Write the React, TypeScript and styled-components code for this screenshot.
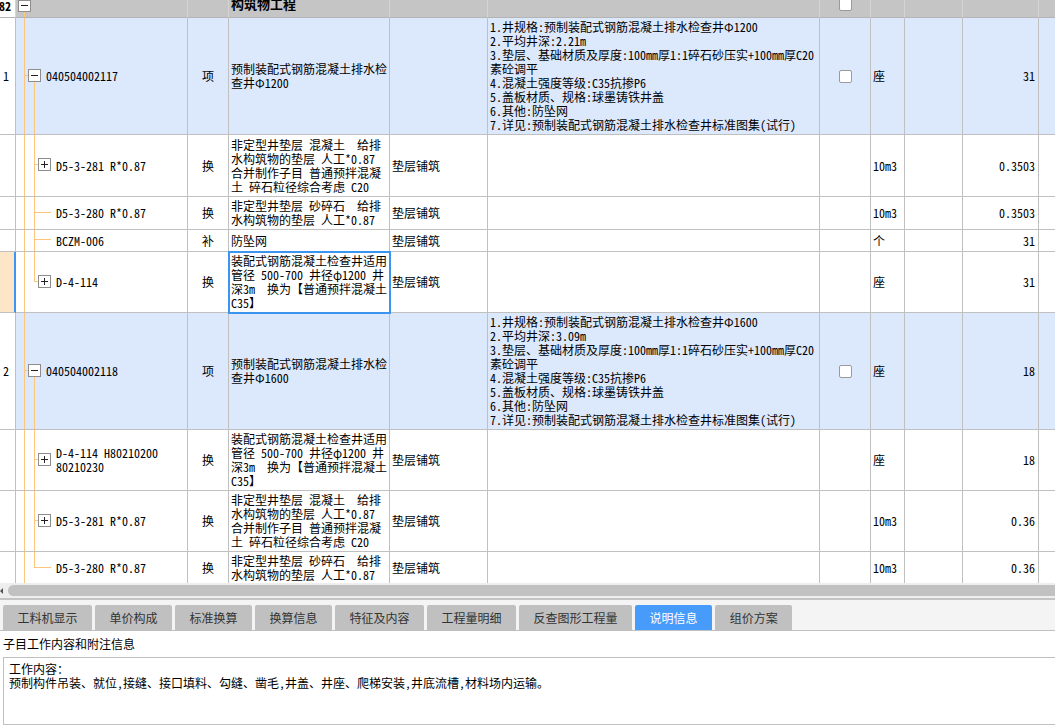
import React from 'react';
import styled, { createGlobalStyle, css } from 'styled-components';

const GRID_FONT = `"Noto Sans Mono CJK SC", "Noto Sans CJK SC", monospace`;
const UI_FONT = `"Noto Sans CJK SC", sans-serif`;
const GRID_LINE = '#c0c0c0';
const TREE_LINE = '#fcc67c';
const BOX_LINE = '#8d8d8d';
const COLS = '16px 172px 41px 161px 98px 332px 51px 34px 58px 76px 60px';

const GlobalStyle = createGlobalStyle`
  html, body {
    margin: 0;
    padding: 0;
    background: #ffffff;
  }
  body {
    font-family: ${GRID_FONT};
    font-size: 12px;
    color: #000;
    overflow: hidden;
  }
`;

const Page = styled.div`
  width: 1055px;
  height: 725px;
  overflow: hidden;
  display: flex;
  flex-direction: column;
  background: #fff;
`;

const Grid = styled.div`
  height: 583px;
  flex-shrink: 0;
  overflow: hidden;
`;

const Row = styled.div<{ $h: number; $tone: 'item' | 'sub' }>`
  display: grid;
  grid-template-columns: ${COLS};
  height: ${(p) => p.$h}px;
  background: ${(p) => (p.$tone === 'item' ? '#dce8fc' : '#ffffff')};
`;

const Cell = styled.div`
  box-sizing: border-box;
  min-width: 0;
  display: flex;
  align-items: center;
  border-right: 1px solid ${GRID_LINE};
  border-bottom: 1px solid ${GRID_LINE};
  line-height: 14px;
  white-space: pre;
  overflow: hidden;
`;

const HeadRow = styled.div`
  display: grid;
  grid-template-columns: ${COLS};
  height: 18px;
  background: #c5c5c5;

  & > ${Cell} {
    align-items: flex-start;
    line-height: 12px;
    border-right-color: #d4d4d4;
    border-bottom-color: #b4b4b4;
  }
`;

const NumCell = styled(Cell)<{ $selected?: boolean }>`
  padding-left: 3px;
  background: #fff;
  ${(p) =>
    p.$selected &&
    css`
      background: #fde6c8;
      border-right: 2px solid #3b95f2;
    `}
`;

const HeadNum = styled.span`
  font-weight: bold;
  margin-left: -4px;
`;

const CodeCell = styled(Cell)`
  padding: 0;
`;

const TreeSvg = styled.svg`
  display: block;
  flex-shrink: 0;
`;

const TypeCell = styled(Cell)`
  justify-content: center;
`;

const TextCell = styled(Cell)<{ $focus?: boolean }>`
  padding: 0 2px;
  ${(p) =>
    p.$focus &&
    css`
      position: relative;
      z-index: 1;
      outline: 2px solid #3a94f0;
      outline-offset: -1px;
    `}
`;

const HeadTitle = styled.span`
  font-weight: bold;
  font-size: 13px;
  margin-top: -2px;
`;

const CheckCell = styled(Cell)`
  justify-content: center;
`;

const Checkbox = styled.span<{ $raised?: boolean }>`
  display: block;
  width: 11px;
  height: 11px;
  border: 1px solid #9a9a9a;
  border-radius: 2px;
  background: #fff;
  ${(p) => p.$raised && 'margin-top: -2px;'}
`;

const QtyCell = styled(Cell)`
  justify-content: flex-end;
  padding-right: 3px;
`;

const HScroll = styled.div`
  height: 15px;
  flex-shrink: 0;
  display: flex;
  align-items: center;
  background: #eeeeee;
`;

const ScrollArrow = styled.span`
  width: 0;
  height: 0;
  border-top: 3px solid transparent;
  border-bottom: 3px solid transparent;
  border-right: 3px solid #555;
`;

const ScrollThumb = styled.div`
  flex: 1;
  height: 11px;
  margin: 0 -12px 0 5px;
  border-radius: 6px;
  background: #c1c1c1;
`;

const Divider = styled.div`
  height: 2px;
  flex-shrink: 0;
  background: #c4c4c4;
`;

const TabStrip = styled.div`
  height: 31px;
  box-sizing: border-box;
  flex-shrink: 0;
  display: flex;
  gap: 3px;
  padding: 5px 0 0 3px;
  background: #f4f4f4;
  border-bottom: 1px solid ${GRID_LINE};
`;

const Tab = styled.div<{ $active?: boolean }>`
  height: 25px;
  padding: 0 14.5px;
  border-radius: 2px 2px 0 0;
  font-family: ${UI_FONT};
  font-size: 12px;
  line-height: 25px;
  white-space: nowrap;
  background: ${(p) => (p.$active ? '#479cfb' : '#c0c0c0')};
  color: ${(p) => (p.$active ? '#ffffff' : '#333333')};
`;

const InfoLabel = styled.div`
  height: 26px;
  flex-shrink: 0;
  padding-left: 3px;
  font-family: ${UI_FONT};
  font-size: 12px;
  line-height: 26px;
`;

const InfoBox = styled.div`
  flex: 1;
  margin: 0 -6px 0 3px;
  padding: 4px 5px;
  border: 1px solid ${GRID_LINE};
  line-height: 14px;
  white-space: pre;
`;

type TreeInfo =
  | { kind: 'root' }
  | { kind: 'item' }
  | { kind: 'child'; toggle: boolean; last?: boolean };

const TreeGuide = ({ h, info }: { h: number; info: TreeInfo }) => {
  const p = Math.floor(h / 2) - 1;
  const y = p + 0.5;
  if (info.kind === 'root') {
    return (
      <TreeSvg width={16} height={h} shapeRendering="crispEdges">
        <line x1={8.5} y1={12} x2={8.5} y2={h} stroke={TREE_LINE} />
        <rect x={2.5} y={0.5} width={12} height={11} fill="#fff" stroke={BOX_LINE} />
        <line x1={5} y1={5.5} x2={12} y2={5.5} stroke="#222" />
      </TreeSvg>
    );
  }
  if (info.kind === 'item') {
    return (
      <TreeSvg width={30} height={h} shapeRendering="crispEdges">
        <line x1={8.5} y1={0} x2={8.5} y2={h} stroke={TREE_LINE} />
        <line x1={9} y1={y} x2={12} y2={y} stroke={TREE_LINE} />
        <line x1={18.5} y1={p + 7} x2={18.5} y2={h} stroke={TREE_LINE} />
        <rect x={12.5} y={p - 5.5} width={12} height={12} fill="#fff" stroke={BOX_LINE} />
        <line x1={15} y1={y} x2={22} y2={y} stroke="#222" />
      </TreeSvg>
    );
  }
  return (
    <TreeSvg width={40} height={h} shapeRendering="crispEdges">
      <line x1={8.5} y1={0} x2={8.5} y2={h} stroke={TREE_LINE} />
      <line x1={18.5} y1={0} x2={18.5} y2={info.last ? p + 1 : h} stroke={TREE_LINE} />
      {info.toggle ? (
        <>
          <line x1={19} y1={y} x2={22} y2={y} stroke={TREE_LINE} />
          <rect x={22.5} y={p - 5.5} width={12} height={12} fill="#fff" stroke={BOX_LINE} />
          <line x1={25} y1={y} x2={32} y2={y} stroke="#222" />
          <line x1={28.5} y1={p - 3} x2={28.5} y2={p + 4} stroke="#222" />
        </>
      ) : (
        <line x1={19} y1={y} x2={35} y2={y} stroke={TREE_LINE} />
      )}
    </TreeSvg>
  );
};

type RowData = {
  h: number;
  num?: string;
  tree: TreeInfo;
  code: string;
  type: string;
  name: string;
  work?: string;
  feat?: string;
  check?: boolean;
  unit: string;
  qty: string;
  selected?: boolean;
};

const features = (phi: string, depth: string) =>
  [
    `1.井规格:预制装配式钢筋混凝土排水检查井Φ${phi}`,
    `2.平均井深:${depth}m`,
    '3.垫层、基础材质及厚度:100mm厚1:1碎石砂压实+100mm厚C20',
    '素砼调平',
    '4.混凝土强度等级:C35抗掺P6',
    '5.盖板材质、规格:球墨铸铁井盖',
    '6.其他:防坠网',
    '7.详见:预制装配式钢筋混凝土排水检查井标准图集(试行)',
  ].join('\n');

const NAME_281 = '非定型井垫层 混凝土  给排\n水构筑物的垫层 人工*0.87\n合并制作子目 普通预拌混凝\n土 碎石粒径综合考虑 C20';
const NAME_280 = '非定型井垫层 砂碎石  给排\n水构筑物的垫层 人工*0.87';
const NAME_114 = '装配式钢筋混凝土检查井适用\n管径 500-700 井径φ1200 井\n深3m  换为【普通预拌混凝土\nC35】';

const rows: RowData[] = [
  { h: 117, num: '1', tree: { kind: 'item' }, code: '040504002117', type: '项', name: '预制装配式钢筋混凝土排水检\n查井Φ1200', feat: features('1200', '2.21'), check: true, unit: '座', qty: '31' },
  { h: 62, tree: { kind: 'child', toggle: true }, code: 'D5-3-281 R*0.87', type: '换', name: NAME_281, work: '垫层铺筑', unit: '10m3', qty: '0.3503' },
  { h: 33, tree: { kind: 'child', toggle: false }, code: 'D5-3-280 R*0.87', type: '换', name: NAME_280, work: '垫层铺筑', unit: '10m3', qty: '0.3503' },
  { h: 22, tree: { kind: 'child', toggle: false }, code: 'BCZM-006', type: '补', name: '防坠网', work: '垫层铺筑', unit: '个', qty: '31' },
  { h: 61, selected: true, tree: { kind: 'child', toggle: true, last: true }, code: 'D-4-114', type: '换', name: NAME_114, work: '垫层铺筑', unit: '座', qty: '31' },
  { h: 117, num: '2', tree: { kind: 'item' }, code: '040504002118', type: '项', name: '预制装配式钢筋混凝土排水检\n查井Φ1600', feat: features('1600', '3.09'), check: true, unit: '座', qty: '18' },
  { h: 61, tree: { kind: 'child', toggle: true }, code: 'D-4-114 H80210200\n80210230', type: '换', name: NAME_114, work: '垫层铺筑', unit: '座', qty: '18' },
  { h: 61, tree: { kind: 'child', toggle: true }, code: 'D5-3-281 R*0.87', type: '换', name: NAME_281, work: '垫层铺筑', unit: '10m3', qty: '0.36' },
  { h: 33, tree: { kind: 'child', toggle: false, last: true }, code: 'D5-3-280 R*0.87', type: '换', name: NAME_280, work: '垫层铺筑', unit: '10m3', qty: '0.36' },
];

const tabs = ['工料机显示', '单价构成', '标准换算', '换算信息', '特征及内容', '工程量明细', '反查图形工程量', '说明信息', '组价方案'];

const App = () => {
  return (
    <Page>
      <GlobalStyle />
      <Grid>
        <HeadRow>
          <NumCell>
            <HeadNum>82</HeadNum>
          </NumCell>
          <CodeCell>
            <TreeGuide h={17} info={{ kind: 'root' }} />
          </CodeCell>
          <TypeCell />
          <TextCell>
            <HeadTitle>构筑物工程</HeadTitle>
          </TextCell>
          <TextCell />
          <TextCell />
          <CheckCell>
            <Checkbox $raised />
          </CheckCell>
          <TextCell />
          <TextCell />
          <QtyCell />
          <TextCell />
        </HeadRow>
        {rows.map((r, i) => (
          <Row key={i} $h={r.h} $tone={r.num ? 'item' : 'sub'}>
            <NumCell $selected={r.selected}>{r.num}</NumCell>
            <CodeCell>
              <TreeGuide h={r.h - 1} info={r.tree} />
              <span>{r.code}</span>
            </CodeCell>
            <TypeCell>{r.type}</TypeCell>
            <TextCell $focus={r.selected}>{r.name}</TextCell>
            <TextCell>{r.work}</TextCell>
            <TextCell>{r.feat}</TextCell>
            <CheckCell>{r.check && <Checkbox />}</CheckCell>
            <TextCell>{r.unit}</TextCell>
            <TextCell />
            <QtyCell>{r.qty}</QtyCell>
            <TextCell />
          </Row>
        ))}
      </Grid>
      <HScroll>
        <ScrollArrow />
        <ScrollThumb />
      </HScroll>
      <Divider />
      <TabStrip>
        {tabs.map((t) => (
          <Tab key={t} $active={t === '说明信息'}>
            {t}
          </Tab>
        ))}
      </TabStrip>
      <InfoLabel>子目工作内容和附注信息</InfoLabel>
      <InfoBox>
        {'工作内容：\n预制构件吊装、就位,接缝、接口填料、勾缝、凿毛,井盖、井座、爬梯安装,井底流槽,材料场内运输。'}
      </InfoBox>
    </Page>
  );
};

export default App;
